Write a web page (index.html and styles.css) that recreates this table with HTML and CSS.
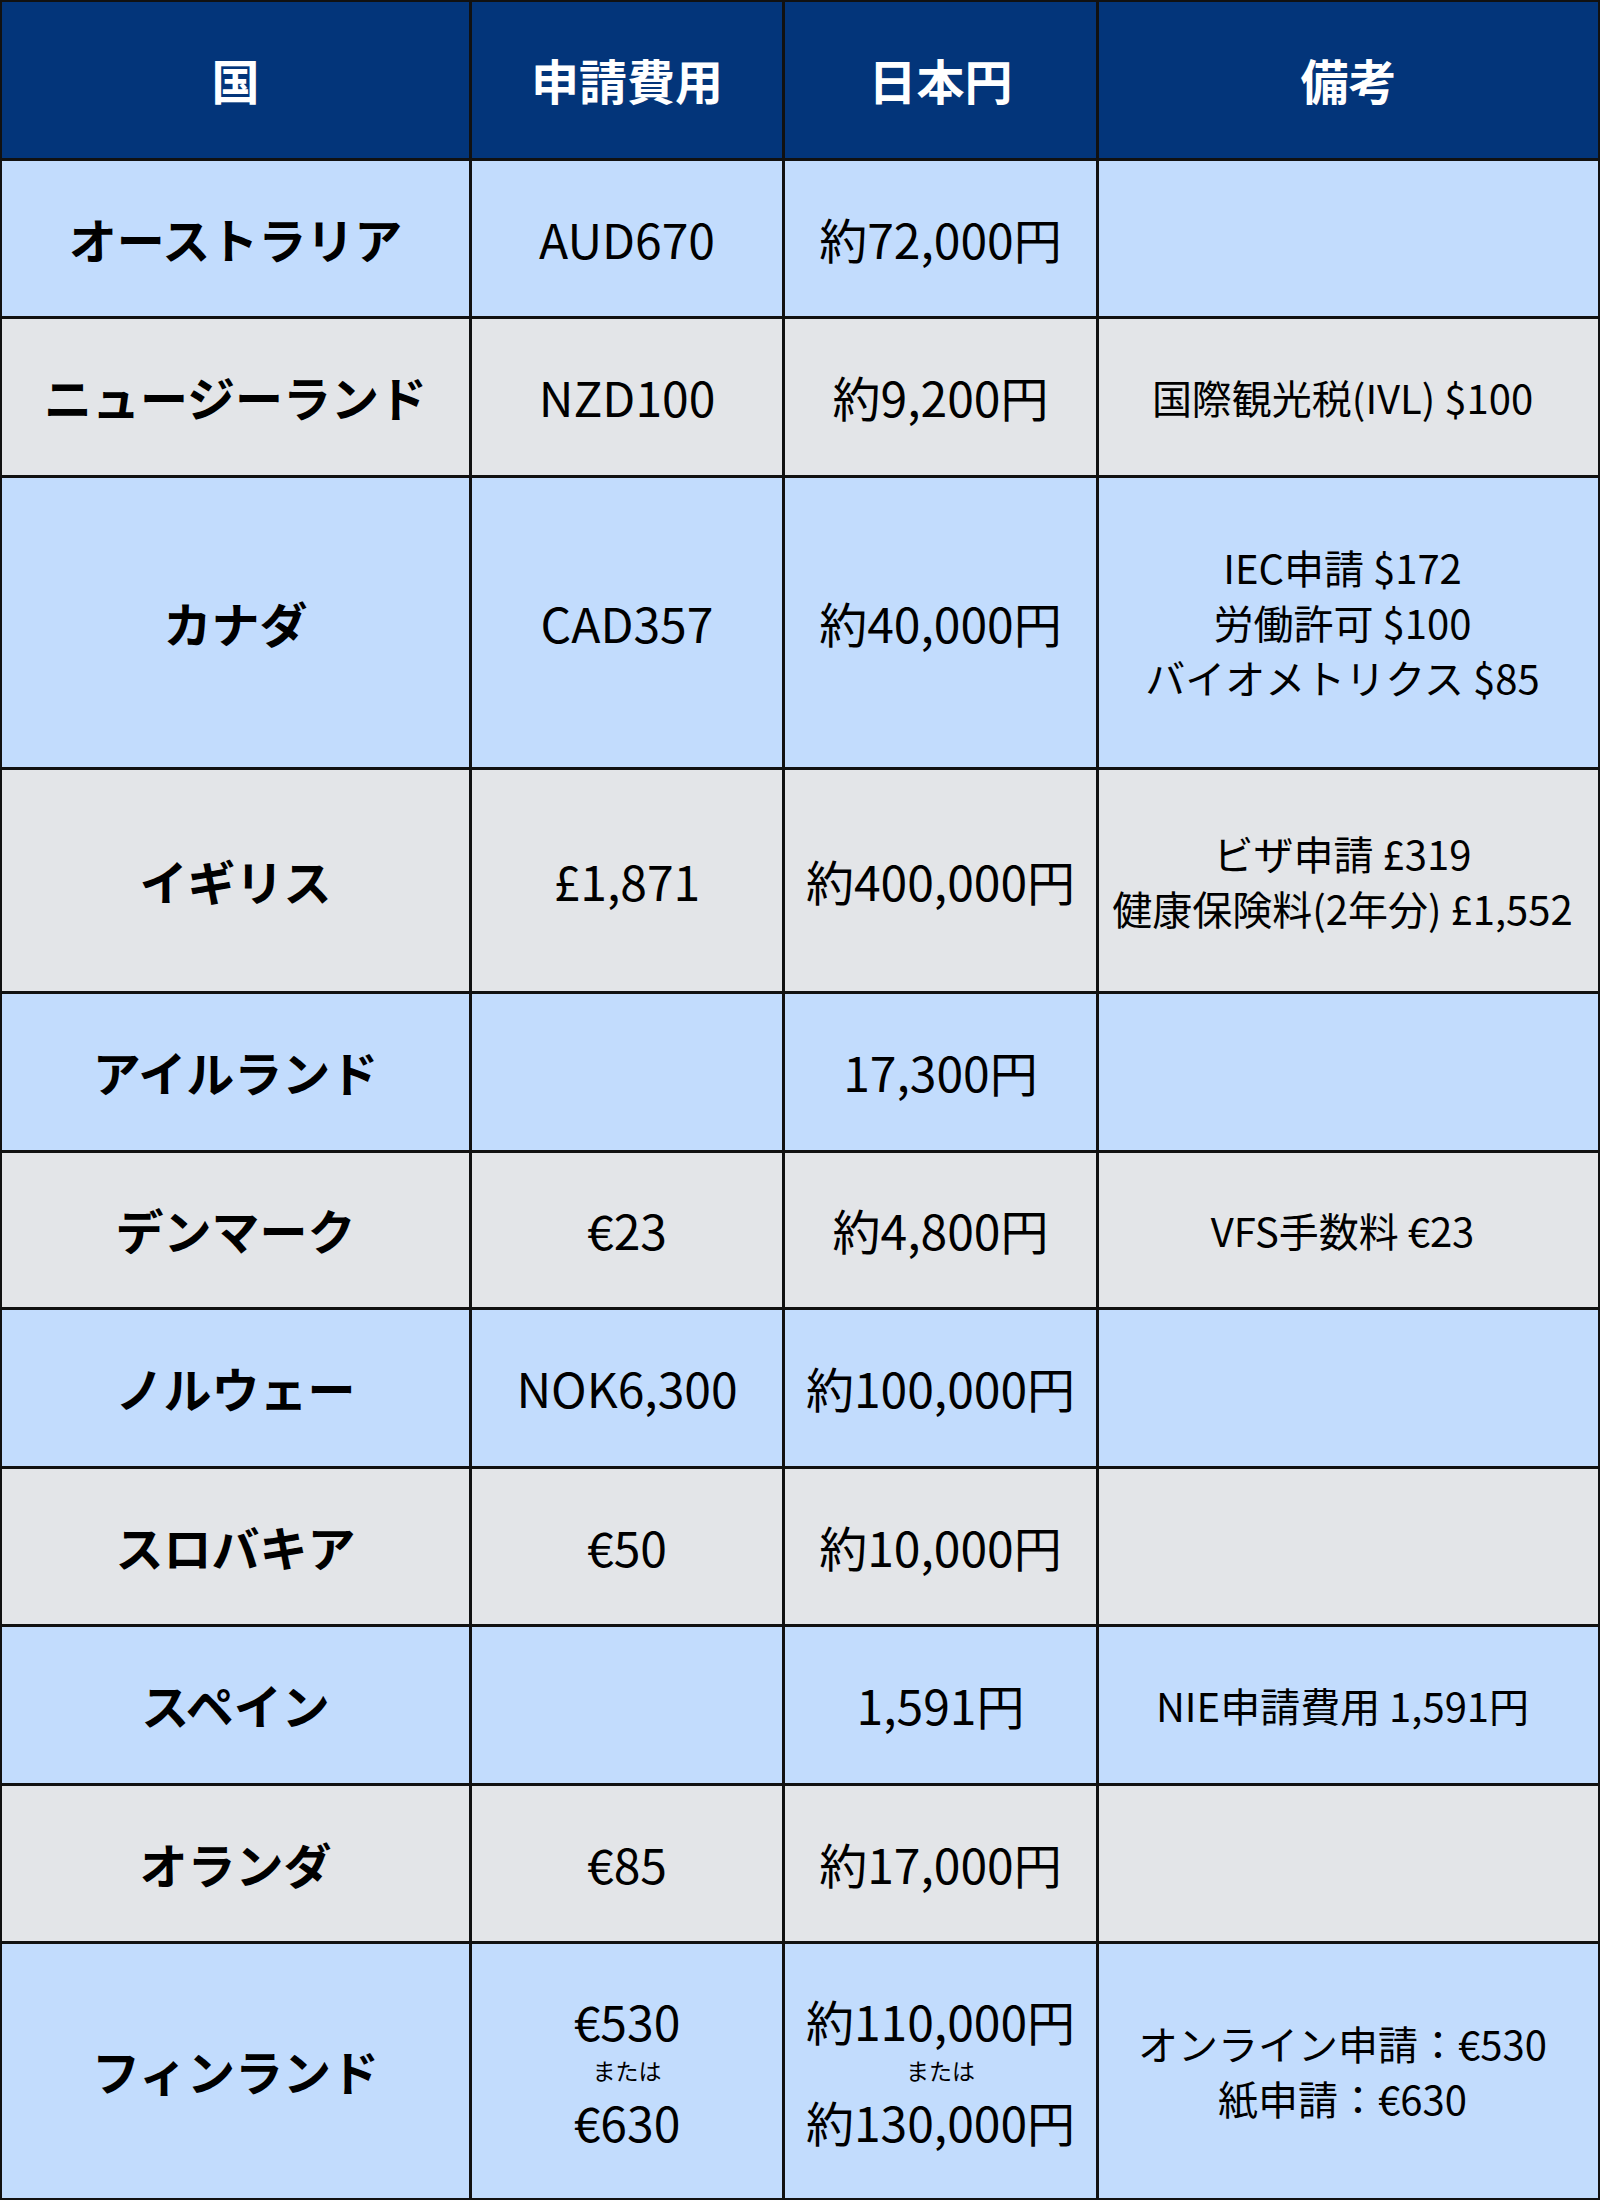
FILE: index.html
```html
<!DOCTYPE html>
<html lang="ja">
<head>
<meta charset="utf-8">
<title>ワーキングホリデー申請費用</title>
<link rel="stylesheet" href="styles.css">
</head>
<body>
<div class="fee-table" role="table">
  <div class="cell head" role="columnheader">国</div>
  <div class="cell head" role="columnheader">申請費用</div>
  <div class="cell head" role="columnheader">日本円</div>
  <div class="cell head" role="columnheader">備考</div>

  <div class="cell blue country">オーストラリア</div>
  <div class="cell blue value">AUD670</div>
  <div class="cell blue value">約72,000円</div>
  <div class="cell blue note"></div>

  <div class="cell gray country">ニュージーランド</div>
  <div class="cell gray value">NZD100</div>
  <div class="cell gray value">約9,200円</div>
  <div class="cell gray note">国際観光税(IVL) $100</div>

  <div class="cell blue country">カナダ</div>
  <div class="cell blue value">CAD357</div>
  <div class="cell blue value">約40,000円</div>
  <div class="cell blue note"><span>IEC申請 $172</span><span>労働許可 $100</span><span>バイオメトリクス $85</span></div>

  <div class="cell gray country">イギリス</div>
  <div class="cell gray value">£1,871</div>
  <div class="cell gray value">約400,000円</div>
  <div class="cell gray note"><span>ビザ申請 £319</span><span>健康保険料(2年分) £1,552</span></div>

  <div class="cell blue country">アイルランド</div>
  <div class="cell blue value"></div>
  <div class="cell blue value">17,300円</div>
  <div class="cell blue note"></div>

  <div class="cell gray country">デンマーク</div>
  <div class="cell gray value">€23</div>
  <div class="cell gray value">約4,800円</div>
  <div class="cell gray note">VFS手数料 €23</div>

  <div class="cell blue country">ノルウェー</div>
  <div class="cell blue value">NOK6,300</div>
  <div class="cell blue value">約100,000円</div>
  <div class="cell blue note"></div>

  <div class="cell gray country">スロバキア</div>
  <div class="cell gray value">€50</div>
  <div class="cell gray value">約10,000円</div>
  <div class="cell gray note"></div>

  <div class="cell blue country">スペイン</div>
  <div class="cell blue value"></div>
  <div class="cell blue value">1,591円</div>
  <div class="cell blue note">NIE申請費用 1,591円</div>

  <div class="cell gray country">オランダ</div>
  <div class="cell gray value">€85</div>
  <div class="cell gray value">約17,000円</div>
  <div class="cell gray note"></div>

  <div class="cell blue country">フィンランド</div>
  <div class="cell blue value"><span>€530</span><span class="or">または</span><span>€630</span></div>
  <div class="cell blue value"><span>約110,000円</span><span class="or">または</span><span>約130,000円</span></div>
  <div class="cell blue note"><span>オンライン申請：€530</span><span>紙申請：€630</span></div>
</div>
</body>
</html>
```

FILE: styles.css
```css
html, body {
  margin: 0;
  padding: 0;
  background: #ffffff;
}

body {
  font-family: "Noto Sans CJK JP", "Noto Sans", sans-serif;
  color: #000000;
}

.fee-table {
  box-sizing: border-box;
  width: 1600px;
  height: 2200px;
  display: grid;
  grid-template-columns: 467px 310px 311px 1fr;
  grid-template-rows: 156px 155px 156px 289px 221px 156px 154px 156px 155px 156px 155px 1fr;
  gap: 3px;
  padding: 2px;
  background: #111111;
}

.cell {
  display: flex;
  flex-direction: column;
  align-items: center;
  justify-content: center;
  text-align: center;
  font-size: 48px;
  line-height: 1.448;
}

.head {
  background: #03357a;
  color: #ffffff;
  font-weight: 700;
}

.blue {
  background: #c2dcfd;
}

.gray {
  background: #e3e5e8;
}

.country {
  font-weight: 700;
}

.value {
  font-weight: 400;
}

.value .or {
  font-size: 23px;
  line-height: 1.35;
}

.note {
  font-size: 40px;
  line-height: 55px;
  padding-right: 12px;
}
```
